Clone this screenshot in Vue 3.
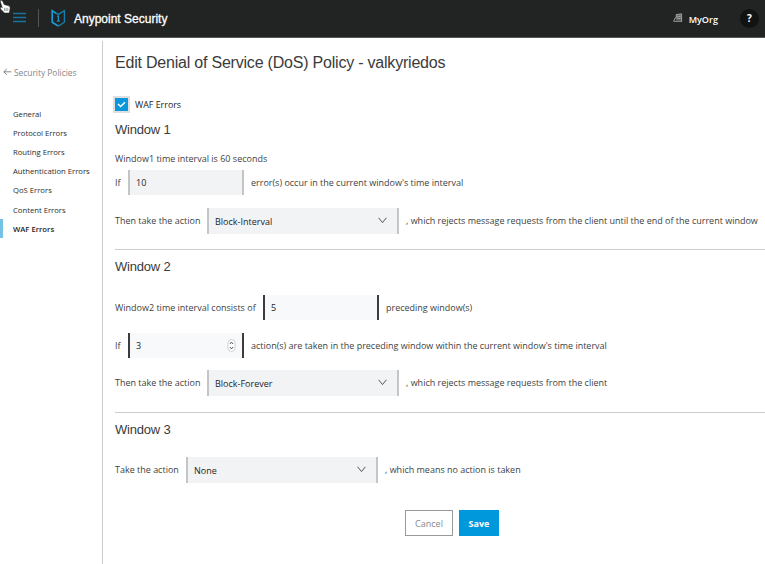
<script setup>
import { ref } from 'vue'

const sections = ['General', 'Protocol Errors', 'Routing Errors', 'Authentication Errors', 'QoS Errors', 'Content Errors', 'WAF Errors']
const active = ref('WAF Errors')
</script>

<template>
  <div class="page">
    <header class="topbar">
      <svg class="burger" width="13" height="12" viewBox="0 0 13 12">
        <path d="M0 1.5H13M0 5.5H13M0 9.5H13" stroke="#14749f" stroke-width="1.3" />
      </svg>
      <span class="bar"></span>
      <svg class="logo" width="15" height="19" viewBox="0 0 15 19" fill="none" stroke-linejoin="miter">
        <path d="M5.2 4.3L1.2 1.7V13.2L7.4 17.1" stroke="#18a0dc" stroke-width="1.6" />
        <path d="M7.4 17.1L13.4 13.2V1.7L7.4 5.4L5 4.1" stroke="#1480ad" stroke-width="1.3" />
        <path d="M6 7.2H7.4V12M5.9 12.2H8.8" stroke="#1893c9" stroke-width="1.3" />
      </svg>
      <span class="brand">Anypoint Security</span>
      <svg class="org-icon" width="10" height="10" viewBox="0 0 10 10">
        <path d="M3.2 1.6L8.4 0.8V7.5H3.2Z" fill="#666" />
        <path d="M3.2 1.6L8.6 0.8V8.5M4.2 3.3H7.7M4.2 5.3H7.7M3.2 1.6V5H2L0.7 8.3H9" fill="none" stroke="#b5b5b5" stroke-width="0.8" />
      </svg>
      <span class="org">MyOrg</span>
      <span class="help">?</span>
    </header>

    <div class="body">
      <nav class="side">
        <a class="back">
          <svg width="9" height="8" viewBox="0 0 9 8" fill="none" stroke="#888" stroke-width="1">
            <path d="M8.3 3.8H0.8M3.9 0.8L0.8 3.8L3.9 6.8" />
          </svg>
          <span>Security Policies</span>
        </a>
        <ul class="links">
          <li v-for="s in sections" :key="s" :class="{ active: s === active }" @click="active = s"><span>{{ s }}</span></li>
        </ul>
      </nav>

      <main class="content">
        <h1>Edit Denial of Service (DoS) Policy - valkyriedos</h1>
        <label class="check">
          <span class="box">
            <svg width="9" height="7" viewBox="0 0 9 7"><path d="M1 3L3.6 5.5L8 1.2" fill="none" stroke="#fff" stroke-width="1.5" /></svg>
          </span>
          <span class="check-text">WAF Errors</span>
        </label>

        <section class="one">
          <h2>Window 1</h2>
          <p class="t w1">Window1 time interval is 60 seconds</p>
          <div class="row r-if">
            <span class="t if">If</span>
            <div class="field muted">10</div>
            <span class="t">error(s) occur in the current window's time interval</span>
          </div>
          <div class="row r-sel">
            <span class="t then">Then take the action</span>
            <div class="select"><span>Block-Interval</span>
              <svg width="9" height="7" viewBox="0 0 9 7"><path d="M0.6 0.8L4.5 5.6L8.4 0.8" fill="none" stroke="#555" /></svg>
            </div>
            <span class="t">, which rejects message requests from the client until the end of the current window</span>
          </div>
        </section>

        <section class="two">
          <h2>Window 2</h2>
          <div class="row r-int">
            <span class="t interval">Window2 time interval consists of</span>
            <div class="field">5</div>
            <span class="t">preceding window(s)</span>
          </div>
          <div class="row r-if">
            <span class="t if">If</span>
            <div class="field">3
              <svg class="spin" width="9" height="13" viewBox="0 0 9 13">
                <rect x="0.9" y="0.5" width="7.2" height="12" rx="3.6" fill="#fff" stroke="#c4c4c4" stroke-width="0.8" />
                <path d="M3 4.9L4.5 3.1L6 4.9M3 8.1L4.5 9.9L6 8.1" fill="none" stroke="#444" />
              </svg>
            </div>
            <span class="t">action(s) are taken in the preceding window within the current window's time interval</span>
          </div>
          <div class="row r-sel">
            <span class="t then">Then take the action</span>
            <div class="select"><span>Block-Forever</span>
              <svg width="9" height="7" viewBox="0 0 9 7"><path d="M0.6 0.8L4.5 5.6L8.4 0.8" fill="none" stroke="#555" /></svg>
            </div>
            <span class="t">, which rejects message requests from the client</span>
          </div>
        </section>

        <section class="three">
          <h2>Window 3</h2>
          <div class="row r-take">
            <span class="t take">Take the action</span>
            <div class="select"><span>None</span>
              <svg width="9" height="7" viewBox="0 0 9 7"><path d="M0.6 0.8L4.5 5.6L8.4 0.8" fill="none" stroke="#555" /></svg>
            </div>
            <span class="t">, which means no action is taken</span>
          </div>
        </section>

        <div class="actions">
          <button class="cancel">Cancel</button>
          <button class="save">Save</button>
        </div>
      </main>
    </div>

    <svg class="cursor" width="12" height="15" viewBox="0 0 12 15">
      <path d="M0.4 0.4C2 0 3.2 1.5 3.6 3.5L4.1 4.6L8.8 5.8Q10.8 6.8 9.8 10L9.2 13H4.5L1 9.4Q-0.3 7.6 1.2 7L2.4 7.8L0.4 2Z" fill="#fff" stroke="#222" stroke-width="0.5" />
      <path d="M4.6 7.8V11M6.2 7.8V11M7.8 7.8V11" stroke="#555" stroke-width="0.6" />
    </svg>
  </div>
</template>

<style>
body { background: #fff; overflow: hidden; }
</style>

<style scoped>
* { box-sizing: border-box; }
.page {
  position: relative;
  display: flex;
  flex-direction: column;
  width: 765px;
  height: 564px;
  overflow: hidden;
  font-family: "Open Sans", sans-serif;
  font-size: 9px;
  color: #3e3f41;
  white-space: nowrap;
}
.topbar {
  display: flex;
  align-items: center;
  flex: none;
  height: 38px;
  padding: 0 6px 1px 13px;
  background: #222423;
  border-bottom: 1px solid #555;
}
.burger { margin-right: 12px; }
.bar { width: 1px; height: 18px; background: #555; margin-right: 12px; }
.logo { margin-right: 8px; }
.brand {
  font-family: "Liberation Sans", sans-serif;
  font-size: 12px;
  line-height: 16px;
  color: #fff;
  padding-top: 2px;
  -webkit-text-stroke: 0.3px #fff;
}
.org-icon { margin-left: auto; margin-right: 6px; }
.org { color: #fff; font-weight: 600; font-size: 9.1px; margin-right: 22px; padding-top: 2px; }
.help {
  width: 19px;
  height: 19px;
  border-radius: 50%;
  background: #111312;
  color: #fff;
  font-weight: 700;
  font-size: 10px;
  line-height: 19px;
  text-align: center;
}
.cursor { position: absolute; left: 0; top: 0; }
.body { display: flex; flex: 1; min-height: 0; padding-top: 3px; }
.side { width: 103px; flex: none; border-right: 1px solid #ccc; padding-top: 23px; }
.back { display: flex; align-items: center; height: 16px; gap: 2px; padding-left: 3px; color: #858687; font-size: 8.4px; }
.back svg { margin-bottom: 1px; }
.links { list-style: none; margin: 24px 0 0; padding: 0; font-size: 7.7px; color: #2c2c2c; }
.links li { display: flex; align-items: center; height: 19.2px; padding-left: 13px; }
.links .active { font-weight: 600; color: #222; padding-left: 10px; border-left: 3px solid #74c3e6; }
.content { flex: 1; min-width: 0; padding-left: 12px; }
h1, h2 { margin: 0; font-family: "Liberation Sans", sans-serif; font-weight: 400; color: #3a3b3c; }
h1 { font-size: 16px; line-height: 20px; margin-top: 12px; letter-spacing: -0.21px; }
.check { display: flex; align-items: center; height: 18px; margin-top: 22px; }
.box {
  display: flex;
  align-items: center;
  justify-content: center;
  width: 13px;
  height: 13px;
  background: #0b97dc;
  box-shadow: 0 0 0 2px #dfdfdf;
}
.check-text { margin-left: 7px; color: #222; font-size: 8.9px; }
h2 { font-size: 13px; line-height: 16px; letter-spacing: -0.2px; }
section { border-bottom: 1px solid #ccc; }
.one { height: 137px; padding-top: 9px; }
.two { height: 163px; padding-top: 9px; }
.three { padding-top: 9px; border: 0; }
.w1 { margin: 14px 0 0; line-height: 14px; }
.row { display: flex; align-items: center; height: 25px; }
.one .r-if { margin-top: 4px; }
.r-sel { height: 26px; margin-top: 12px; }
.one .r-sel { margin-top: 13px; }
.r-int { margin-top: 20px; }
.two .r-if { margin-top: 13px; }
.r-take { height: 26px; margin-top: 19px; }
.t { font-size: 8.99px; }
.r-sel .t, .r-take .t { padding-bottom: 1px; }
.one .r-sel .t { padding-bottom: 2px; }
.if { width: 13px; }
.then { width: 92px; }
.interval { width: 148px; }
.take { width: 71px; }
.field, .select {
  display: flex;
  align-items: center;
  justify-content: space-between;
  flex: none;
  height: 25px;
  padding-left: 6px;
  margin-right: 7px;
  color: #242426;
}
.field { width: 116px; background: #f8f9fb; border: solid #3c3c3e; border-width: 0 2px; }
.muted { background: #f2f3f5; border-color: #c4c4c6; }
.spin { margin-right: 6px; }
.select { width: 192px; height: 26px; background: #f2f3f5; border: solid #c4c5c7; border-width: 0 2px; padding-right: 10px; }
.select svg { margin-bottom: 2px; }
.actions { display: flex; gap: 6px; margin-top: 27px; padding-left: 290px; }
button { height: 26px; padding: 0; font-family: inherit; font-size: 9px; }
.cancel { width: 48px; background: #fff; border: 1px solid #999; color: #88898b; }
.save { width: 40px; background: #0098dd; border: 0; color: #fff; font-weight: 700; }
</style>
